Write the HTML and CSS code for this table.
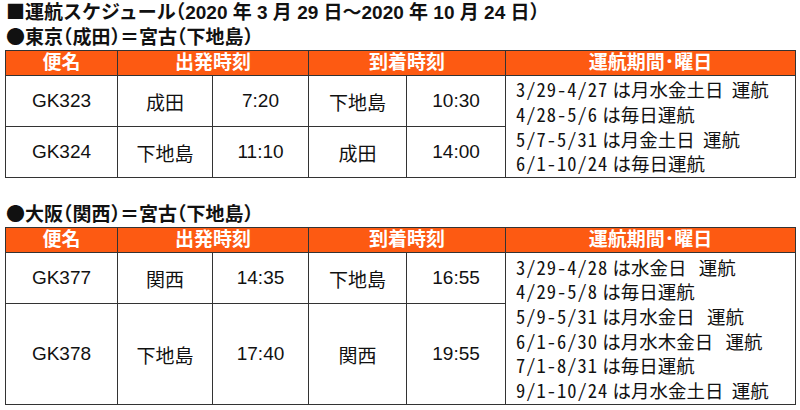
FILE: index.html
```html
<!DOCTYPE html>
<html lang="ja">
<head>
<meta charset="utf-8">
<title>運航スケジュール</title>
<link rel="stylesheet" href="styles.css">
</head>
<body>
<div class="page">
  <h1 class="title"><span class="mk">■</span>運航スケジュール（2020 年 3 月 29 日～2020 年 10 月 24 日）</h1>
  <h2 class="route"><span class="mk">●</span>東京（成田）＝宮古（下地島）</h2>
  <table class="sched">
    <colgroup>
      <col class="c1"><col class="c2"><col class="c3"><col class="c4"><col class="c5"><col class="c6">
    </colgroup>
    <thead>
      <tr><th>便名</th><th colspan="2">出発時刻</th><th colspan="2">到着時刻</th><th>運航期間･曜日</th></tr>
    </thead>
    <tbody>
      <tr class="r51">
        <td>GK323</td><td>成田</td><td>7:20</td><td>下地島</td><td>10:30</td>
        <td rowspan="2" class="period">
          <div class="ln"><span class="d">3/29-4/27</span> は月水金土日  運航</div>
          <div class="ln"><span class="d">4/28-5/6</span> は毎日運航</div>
          <div class="ln"><span class="d">5/7-5/31</span> は月金土日  運航</div>
          <div class="ln"><span class="d">6/1-10/24</span> は毎日運航</div>
        </td>
      </tr>
      <tr class="r51">
        <td>GK324</td><td>下地島</td><td>11:10</td><td>成田</td><td>14:00</td>
      </tr>
    </tbody>
  </table>
  <h2 class="route second"><span class="mk">●</span>大阪（関西）＝宮古（下地島）</h2>
  <table class="sched">
    <colgroup>
      <col class="c1"><col class="c2"><col class="c3"><col class="c4"><col class="c5"><col class="c6">
    </colgroup>
    <thead>
      <tr><th>便名</th><th colspan="2">出発時刻</th><th colspan="2">到着時刻</th><th>運航期間･曜日</th></tr>
    </thead>
    <tbody>
      <tr class="r51">
        <td>GK377</td><td>関西</td><td>14:35</td><td>下地島</td><td>16:55</td>
        <td rowspan="2" class="period">
          <div class="ln"><span class="d">3/29-4/28</span> は水金日   運航</div>
          <div class="ln"><span class="d">4/29-5/8</span> は毎日運航</div>
          <div class="ln"><span class="d">5/9-5/31</span> は月水金日   運航</div>
          <div class="ln"><span class="d">6/1-6/30</span> は月水木金日   運航</div>
          <div class="ln"><span class="d">7/1-8/31</span> は毎日運航</div>
          <div class="ln"><span class="d">9/1-10/24</span> は月水金土日  運航</div>
        </td>
      </tr>
      <tr class="r101">
        <td>GK378</td><td>下地島</td><td>17:40</td><td>関西</td><td>19:55</td>
      </tr>
    </tbody>
  </table>
</div>
</body>
</html>
```

FILE: styles.css
```css
html, body {
  margin: 0;
  padding: 0;
  background: #ffffff;
}
body {
  font-family: "Liberation Sans", "Noto Sans CJK JP", sans-serif;
  color: #111111;
}
.page {
  padding: 0 5px;
}
.title, .route {
  margin: 0;
  font-size: 19px;
  font-weight: bold;
  line-height: 25px;
  height: 25px;
  white-space: nowrap;
  padding-left: 1px;
  font-feature-settings: "halt";
}
.mk {
  font-family: "Noto Sans CJK JP", sans-serif;
  font-feature-settings: normal;
  line-height: 1;
}
.route.second {
  margin-top: 24px;
}
.sched {
  border-collapse: collapse;
  table-layout: fixed;
  width: 790px;
  font-size: 19px;
}
.c1 { width: 112px; }
.c2 { width: 95px; }
.c3 { width: 96px; }
.c4 { width: 98px; }
.c5 { width: 99px; }
.c6 { width: 290px; }
.sched th, .sched td {
  border: 1px solid #333333;
  padding: 0;
  text-align: center;
  vertical-align: middle;
}
.sched th {
  background: #fd5a12;
  color: #ffffff;
  font-weight: bold;
  height: 24px;
  line-height: 24px;
}
.r51 td { height: 50px; }
.r101 td { height: 100px; }
.sched td.period {
  text-align: left;
  padding-left: 10px;
  font-family: "Noto Sans CJK JP", sans-serif;
}
.ln {
  white-space: pre;
  height: 24.6px;
  line-height: 24.6px;
  font-size: 18.5px;
}
.d {
  font-feature-settings: "hwid";
  letter-spacing: 1px;
}
```
